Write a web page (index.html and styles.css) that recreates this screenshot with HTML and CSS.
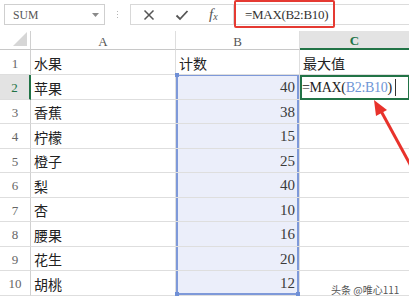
FILE: index.html
```html
<!DOCTYPE html>
<html lang="zh">
<head>
<meta charset="utf-8">
<link rel="stylesheet" href="styles.css">
</head>
<body>
<div class="app">
  <div class="toolbar">
    <div class="namebox">
      <span class="nb-text">SUM</span>
      <svg class="caret" width="7" height="4" viewBox="0 0 7 4"><path d="M0 0H7L3.5 4Z" fill="#8a8a8a"/></svg>
    </div>
    <div class="dots"><i></i><i></i><i></i></div>
    <div class="fxbtns">
      <svg class="ico" width="12" height="12" viewBox="0 0 12 12"><path d="M1.5 1.5L10.5 10.5M10.5 1.5L1.5 10.5" stroke="#555" stroke-width="1.5" fill="none"/></svg>
      <svg class="ico" width="14" height="12" viewBox="0 0 14 12"><path d="M1.5 6.5L5 10L12.5 2" stroke="#555" stroke-width="1.8" fill="none"/></svg>
      <span class="fx">f<sub>x</sub></span>
    </div>
    <div class="formula">=MAX(B2:B10)</div>
    <div class="redbox"></div>
  </div>

  <div class="sheet">
    <div class="corner"><svg width="14" height="14" viewBox="0 0 14 14"><path d="M14 0V14H0Z" fill="#d6d6d6"/></svg></div>
    <div class="colh">A</div>
    <div class="colh">B</div>
    <div class="colh active">C</div>

    <div class="rowh">1</div><div class="cell">水果</div><div class="cell">计数</div><div class="cell">最大值</div>

    <div class="rowh active">2</div><div class="cell">苹果</div><div class="cell num sel sel-top">40<i class="handle h-tl"></i></div><div class="cell editing">=MAX(<span class="ref">B2:B10</span>)<span class="caretline"></span></div>

    <div class="rowh">3</div><div class="cell">香蕉</div><div class="cell num sel">38</div><div class="cell"></div>
    <div class="rowh">4</div><div class="cell">柠檬</div><div class="cell num sel">15</div><div class="cell"></div>
    <div class="rowh">5</div><div class="cell">橙子</div><div class="cell num sel">25</div><div class="cell"></div>
    <div class="rowh">6</div><div class="cell">梨</div><div class="cell num sel">40</div><div class="cell"></div>
    <div class="rowh">7</div><div class="cell">杏</div><div class="cell num sel">10</div><div class="cell"></div>
    <div class="rowh">8</div><div class="cell">腰果</div><div class="cell num sel">16</div><div class="cell"></div>
    <div class="rowh">9</div><div class="cell">花生</div><div class="cell num sel">20</div><div class="cell"></div>
    <div class="rowh">10</div><div class="cell">胡桃</div><div class="cell num sel sel-bottom">12<i class="handle h-bl"></i><i class="handle h-br"></i></div><div class="cell"></div>
  </div>

  <svg class="arrow" width="409" height="302" viewBox="0 0 409 302">
    <path d="M412 168L381 111" stroke="#e8322b" stroke-width="3" fill="none"/>
    <path d="M374 100L387 110L376 116Z" fill="#e8322b"/>
  </svg>
  <div class="watermark">头条 @唯心111</div>
</div>
</body>
</html>
```
FILE: styles.css
```css
* { box-sizing: border-box; }
html, body { margin: 0; padding: 0; background: #fff; }
body { width: 409px; height: 302px; overflow: hidden; font-family: "Liberation Serif", "Noto Sans CJK SC", serif; }

.app { position: relative; width: 409px; height: 302px; overflow: hidden; }

.toolbar {
  height: 31px;
  display: flex;
  align-items: flex-start;
  padding-top: 4px;
  padding-left: 4px;
  position: relative;
}
.namebox {
  width: 101px; height: 21px;
  border: 1px solid #cfcfcf;
  display: flex; align-items: center; justify-content: space-between;
  padding: 0 5px 0 8px;
  color: #555; font-size: 13px;
}
.nb-text { font-family: "Liberation Serif", serif; transform: scaleX(0.9); transform-origin: left; }
.dots {
  width: 25px; height: 21px;
  display: flex; flex-direction: column; align-items: center; justify-content: center; gap: 2px;
}
.dots i { width: 1px; height: 1px; background: #b5b5b5; display: block; }
.fxbtns {
  width: 104px; height: 21px;
  border: 1px solid #d8d8d8;
  display: flex; align-items: center;
  padding-left: 12px; gap: 20px;
}
.fx { font-style: italic; font-family: "Liberation Serif", serif; font-size: 15px; color: #555; line-height: 1; }
.fx sub { font-size: 10px; vertical-align: -1px; }
.formula {
  flex: 1; height: 21px;
  border-top: 1px solid #dcdcdc; border-bottom: 1px solid #dcdcdc;
  display: flex; align-items: center;
  padding-left: 11px;
  font-size: 13px; color: #333; letter-spacing: -0.3px;
}
.redbox {
  position: absolute; left: 234px; top: 0; width: 101px; height: 28px;
  border: 2px solid #e53a32; border-radius: 2px;
}

.sheet {
  display: grid;
  grid-template-columns: 31px 145px 124px 110px;
  grid-template-rows: 19px 25px repeat(9, 24.5px);
}
.corner { border-right: 1px solid #d0d0d0; border-bottom: 1px solid #c8c8c8; display: flex; align-items: flex-end; justify-content: flex-end; padding: 0 3px 3px 0; }
.colh {
  border-right: 1px solid #dedede; border-bottom: 1px solid #c8c8c8;
  display: flex; align-items: center; justify-content: center;
  font-size: 13px; color: #555; padding-top: 4px;
}
.colh.active { background: #e3e3e3; color: #217346; font-weight: bold; border-bottom: 2px solid #217346; padding-top: 3px; }
.rowh {
  border-right: 1px solid #d0d0d0; border-bottom: 1px solid #dedede;
  display: flex; align-items: center; justify-content: center;
  font-size: 13px; color: #666; padding-top: 3px;
}
.rowh.active { background: #e3e3e3; color: #217346; border-right: 2px solid #217346; }
.cell {
  border-right: 1px solid #dedede; border-bottom: 1px solid #dedede;
  display: flex; align-items: center;
  padding: 2px 3px 0 3px;
  font-size: 14px; color: #222;
  font-family: "Noto Sans CJK SC", sans-serif;
  position: relative;
  white-space: nowrap;
}
.cell.num { justify-content: flex-end; font-family: "Liberation Serif", serif; font-size: 15px; color: #3a3a3a; padding-right: 4px; }
.sel { background: #ebeefa; box-shadow: inset 2px 0 #7e99d9, inset -2px 0 #7e99d9; }
.sel-top { box-shadow: inset 2px 0 #7e99d9, inset -2px 0 #7e99d9, inset 0 1px #7e99d9; }
.sel-bottom { box-shadow: inset 2px 0 #7e99d9, inset -2px 0 #7e99d9, inset 0 -2px #7e99d9; }
.handle { position: absolute; width: 4px; height: 4px; background: #6f8fd6; display: block; }
.h-tl { left: -1px; top: -2px; }
.h-bl { left: -1px; bottom: -1px; }
.h-br { right: -1px; bottom: -1px; }
.cell.editing {
  outline: 2px solid #217346; outline-offset: -2px;
  font-family: "Liberation Serif", serif; font-size: 14px; color: #222;
  padding-left: 2px; letter-spacing: -0.3px;
}
.ref { color: #6e95d6; }
.caretline { display: inline-block; width: 1px; height: 17px; background: #333; margin-left: 3px; }

.arrow { position: absolute; left: 0; top: 0; pointer-events: none; }
.watermark {
  position: absolute; left: 331px; top: 282px;
  font-family: "Noto Sans CJK SC", sans-serif; font-size: 10px; color: #555;
}
```
